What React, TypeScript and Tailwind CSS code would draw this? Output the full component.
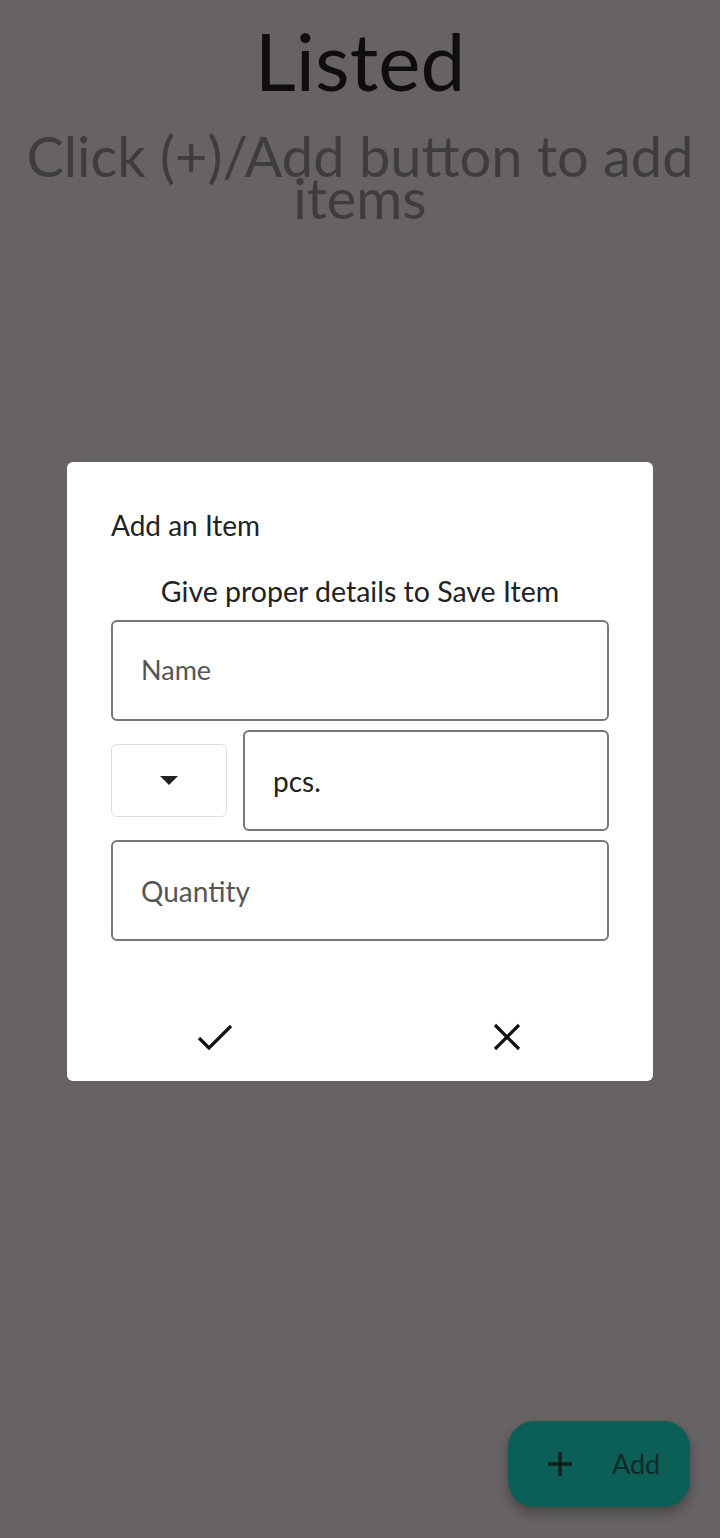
import React from "react";

export default function App() {
  const font = { fontFamily: "Lato, 'Open Sans', sans-serif" };
  return (
    <div className="relative w-[720px] h-[1538px] bg-[#676364] overflow-hidden" style={font}>
      <div className="flex flex-col items-center pt-[10px]">
        <h1 className="text-[80px] leading-[100px] text-[#0f0d0e] font-normal">Listed</h1>
        <p className="mt-[25px] text-[56px] leading-[42px] text-[#3f3c3d] text-center px-[10px]">
          Click (+)/Add button to add items
        </p>
      </div>

      <div className="absolute left-[67px] top-[462px] w-[586px] h-[619px] bg-white rounded-[6px] flex flex-col px-[44px]">
        <div className="pt-[46px] text-[28px] leading-[34px] text-[#222]">Add an Item</div>
        <div className="mt-[32px] text-center text-[28.5px] leading-[34px] text-[#222]">Give proper details to Save Item</div>
        <div className="mt-[12px] h-[101px] border-2 border-[#777] rounded-[6px] flex items-center pl-[28px] text-[27px] text-[#555]">
          Name
        </div>
        <div className="mt-[9px] flex gap-[16px]">
          <div className="mt-[14px] w-[116px] h-[73px] border border-[#ddd] rounded-[6px] flex items-center justify-center">
            <svg width="18" height="10" viewBox="0 0 18 10"><path d="M0 0h18L9 9z" fill="#222" /></svg>
          </div>
          <div className="flex-1 h-[101px] border-2 border-[#777] rounded-[6px] flex items-center pl-[28px] text-[28px] text-[#222]">
            pcs.
          </div>
        </div>
        <div className="mt-[9px] h-[101px] border-2 border-[#777] rounded-[6px] flex items-center pl-[28px] text-[28px] text-[#555]">
          Quantity
        </div>
        <div className="mt-[82px] flex">
          <div className="ml-[86px]">
            <svg width="36" height="28" viewBox="0 0 36 28"><path d="M2 15l10 10L34 3" fill="none" stroke="#111" strokeWidth="3.2" /></svg>
          </div>
          <div className="ml-[260px]">
            <svg width="28" height="28" viewBox="0 0 28 28"><path d="M2 2l24 24M26 2L2 26" fill="none" stroke="#111" strokeWidth="3.2" /></svg>
          </div>
        </div>
      </div>

      <div className="absolute left-[508px] top-[1421px] w-[182px] h-[86px] rounded-[26px] bg-[#0b5f57] shadow-[0_6px_12px_rgba(0,0,0,0.3)] flex items-center pl-[38px] gap-[38px]">
        <svg width="28" height="28" viewBox="0 0 28 28"><path d="M14 2v24M2 14h24" stroke="#0c1f1c" strokeWidth="3.5" /></svg>
        <span className="text-[27px] text-[#0f2a27]">Add</span>
      </div>
    </div>
  );
}
